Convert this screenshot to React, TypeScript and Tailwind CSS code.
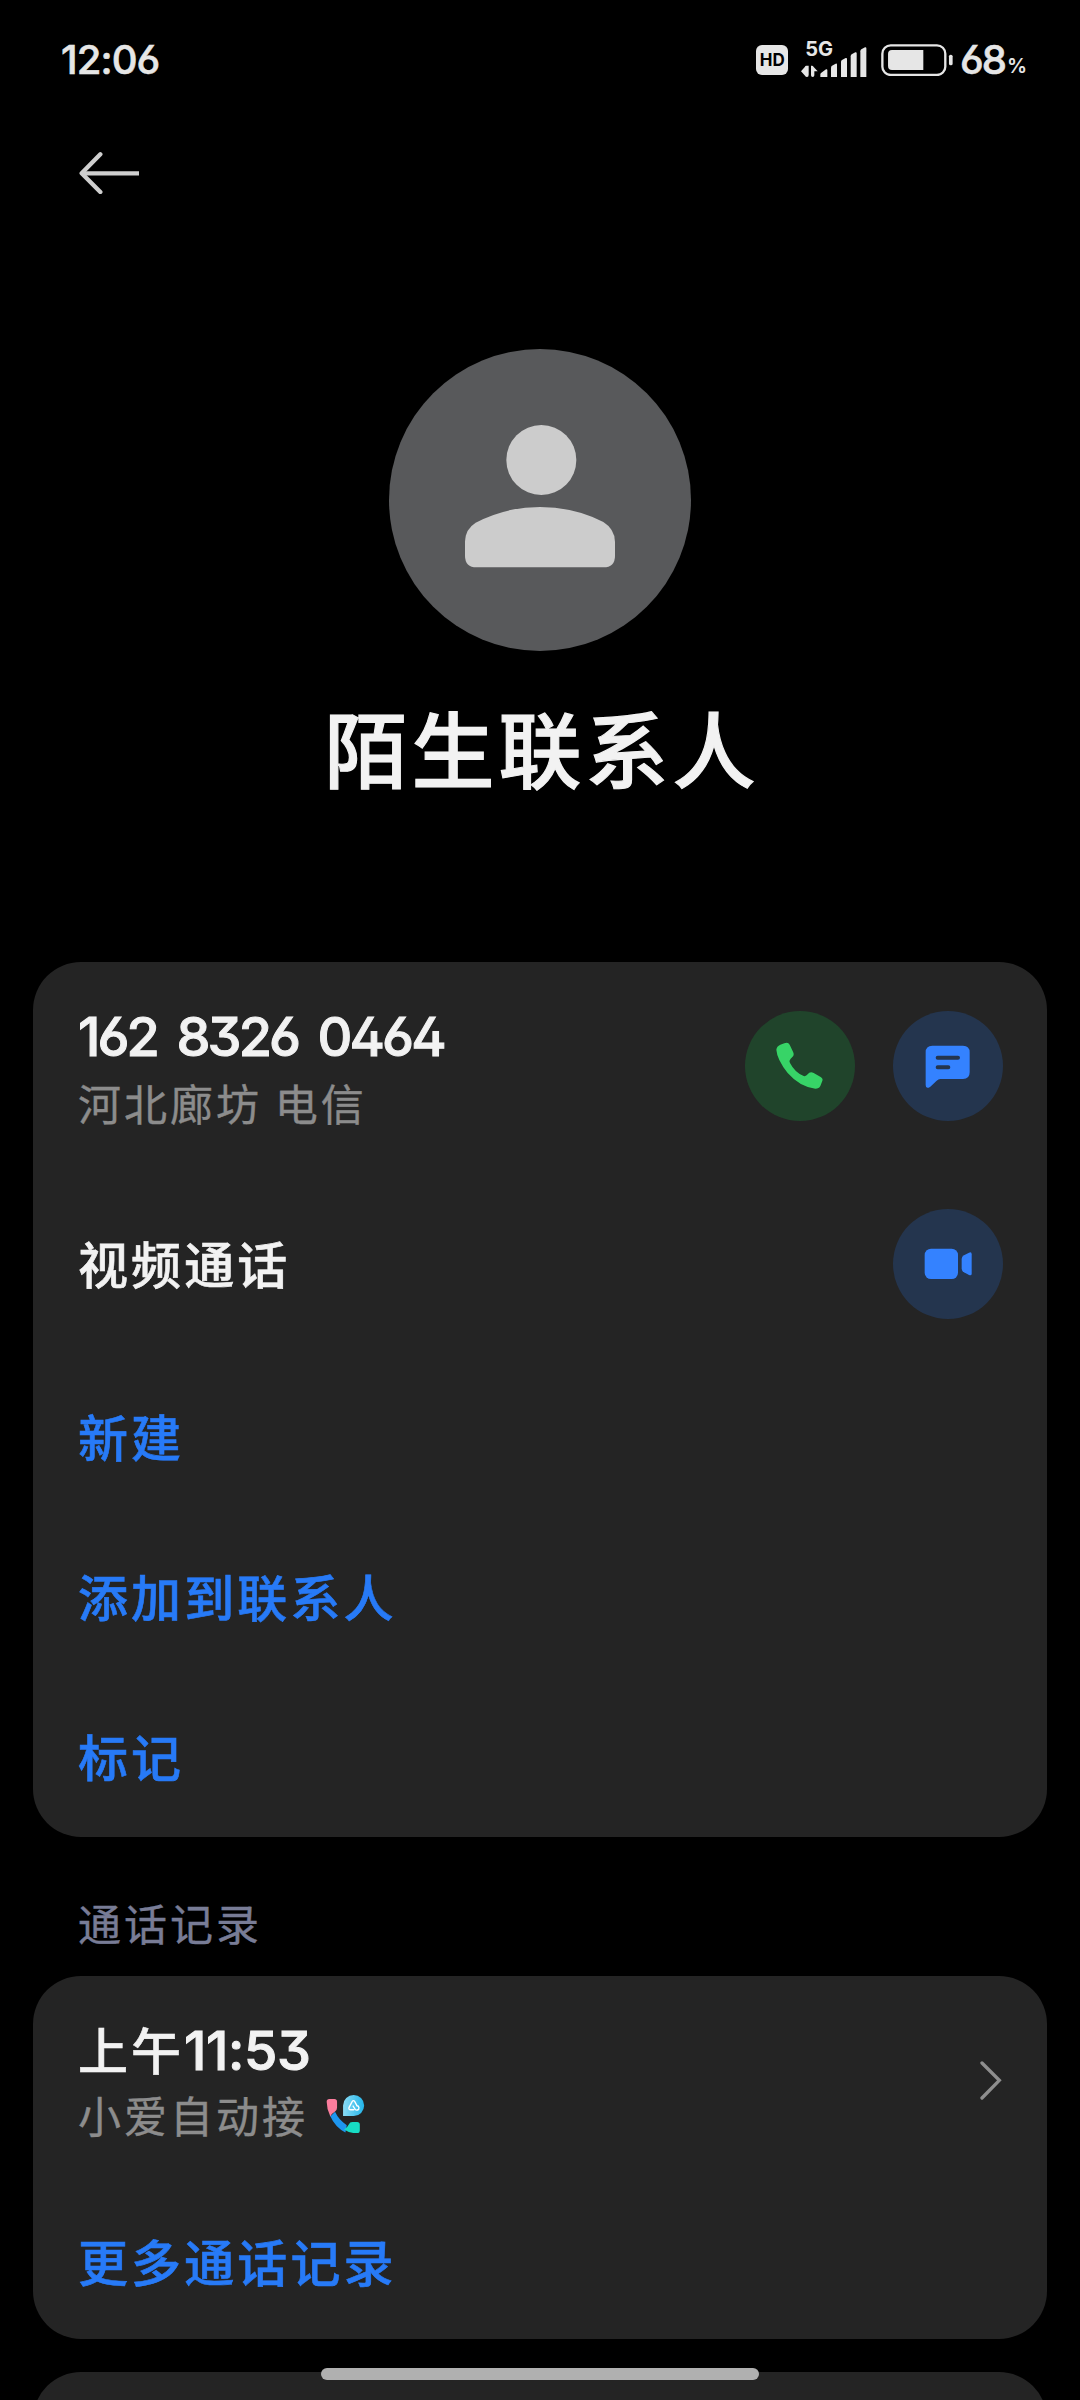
import type { ReactNode } from 'react';

const CJK = "font-['Noto_Sans_CJK_SC',sans-serif]";
const NUM = "font-['Inter','Noto_Sans_CJK_SC',sans-serif] [font-feature-settings:'ss01']";
const MEDIUM = 'font-medium [-webkit-text-stroke:0.6px_currentColor]';
const REGULAR = 'font-normal [-webkit-text-stroke:0.4px_currentColor]';

function StatusBar() {
  return (
    <header className="flex h-[118px] shrink-0 items-center pt-[2px] pr-[53px] pl-[61px] text-[#e6e6e6]">
      <span className={`text-[40px] leading-none font-medium tracking-[-0.9px] [-webkit-text-stroke:0.6px_currentColor] ${NUM}`}>12:06</span>
      <div className="ml-auto flex items-center">
        <span className="flex h-[30px] w-8 items-center justify-center rounded-[6px] bg-[#e6e6e6] font-['Inter',sans-serif] text-[17px] leading-none font-bold text-black">
          HD
        </span>
        <div className="ml-[13px] flex h-[34px] w-[66px] flex-col">
          <span className="h-[14px] pl-[4px] font-['Inter',sans-serif] text-[20px] leading-[12px] font-bold">5G</span>
        </div>
        <svg viewBox="214 60 200 108" className="-ml-[66px] h-[36px] w-[66.7px]" fill="currentColor">
          <path d="M214 148L226 134V148ZM214 148H226V134Q226 131 230 131H237V158Q237 165 232 165Q228 165 226 161Z" />
          <path d="M244 131H247Q250 131 252 135L264 148H254V160Q254 165 249 165Q244 165 244 160Z" />
          <path d="M272 165v-8q0-3 3-5l14-10q4-2 4 3v20z" />
          <path d="M304 165v-28q0-4 3-6l11-6q4-1 4 3v37z" />
          <path d="M334 165v-45q0-4 3-6l11-6q4-1 4 3v54z" />
          <path d="M363 165v-62q0-4 3-6l11-6q4-1 4 3v71z" />
          <path d="M392 165v-77q0-4 3-6l11-6q4-1 4 3v86z" />
        </svg>
        <svg viewBox="453 69 216 97" className="ml-[13px] h-[32.3px] w-[72px]">
          <rect x="457" y="73" width="189" height="89" rx="25" fill="none" stroke="currentColor" strokeWidth="7" />
          <path d="M486 87h94v60h-94q-12 0-12-12v-36q0-12 12-12z" fill="currentColor" />
          <rect x="657" y="101" width="11" height="32" rx="5" fill="currentColor" />
        </svg>
        <span className={`ml-[7px] text-[40px] leading-none font-medium tracking-[-2px] [-webkit-text-stroke:0.6px_currentColor] ${NUM}`}>68</span>
        <span className={`mt-[11px] ml-[2px] text-[20px] leading-none font-semibold ${NUM}`}>%</span>
      </div>
    </header>
  );
}

function Avatar() {
  return (
    <svg viewBox="0 0 906 906" className="size-[302px] shrink-0">
      <circle cx="453" cy="453" r="453" fill="#58595b" />
      <circle cx="457" cy="333" r="105" fill="#ccc" />
      <path
        d="M228 578Q229 540 260 521Q350 474 453 474Q556 474 643 519Q677 540 678 578V620Q678 655 643 655H263Q228 655 228 620Z"
        fill="#ccc"
      />
    </svg>
  );
}

function RoundButton({ label, className, children }: { label: string; className: string; children: ReactNode }) {
  return (
    <button aria-label={label} className={`size-[110px] rounded-full ${className}`}>
      <svg viewBox="0 0 330 330" className="size-full" fill="currentColor">
        {children}
      </svg>
    </button>
  );
}

function Card({ children, className = '' }: { children?: ReactNode; className?: string }) {
  return <section className={`mx-[33px] rounded-[48px] bg-[#242424] pr-[44px] pl-[45px] ${className}`}>{children}</section>;
}

function LinkRow({ children, className = 'h-[160px]' }: { children: ReactNode; className?: string }) {
  return (
    <div className={`flex items-center pb-[4px] text-[50px] leading-none tracking-[3.1px] text-[#277af7] ${MEDIUM} ${className}`}>
      {children}
    </div>
  );
}

function AutoAnswerIcon() {
  return (
    <svg viewBox="0 0 115 115" className="size-[38.5px]">
      <defs>
        <linearGradient id="bubble" x1="0" y1="0" x2="1" y2="0">
          <stop offset="0" stopColor="#8bdcf5" />
          <stop offset="1" stopColor="#22b5ea" />
        </linearGradient>
      </defs>
      <path d="M15 62L27 50Q38 74 62 90L58 112Q28 98 11 60Z" fill="#1e96ee" />
      <path d="M10 12H25Q33 12 33 20V38Q33 45 27 49Q17 55 13 64Q2 42 2 20Q2 12 10 12Z" fill="#fb7d9d" />
      <path d="M54 103Q64 97 68 88Q71 81 79 81H93Q101 81 101 89V106Q101 114 93 114H87Q68 113 54 103Z" fill="#17dcc4" />
      <path d="M51 63V31A31.5 31.5 0 1 1 83 63Z" fill="url(#bubble)" />
      <path
        d="M83 44H74Q66 44 69 37L78 20Q82 14 86 20L92 31M92 32a6.500 6.500 0 1 1-6 9l-5-8"
        fill="none"
        stroke="#fff"
        strokeWidth="4"
        strokeLinecap="round"
      />
    </svg>
  );
}

export default function App() {
  return (
    <div className={`relative flex h-[2400px] w-[1080px] flex-col overflow-hidden bg-black ${CJK}`}>
      <StatusBar />

      <nav className="flex h-[110px] shrink-0 items-center pl-[79px] text-[#cfcfcf]">
        <svg viewBox="0 0 183 126" className="h-[42px] w-[61px]" fill="none" stroke="currentColor" strokeWidth="13" strokeLinecap="round" strokeLinejoin="round">
          <path d="M64 7L8 64L64 120" />
          <path d="M10 64H180" strokeLinecap="butt" />
        </svg>
      </nav>

      <div className="flex h-[734px] shrink-0 flex-col items-center pt-[121px]">
        <Avatar />
        <h1 className="mt-[50px] pl-[4px] text-[83px] leading-[90px] font-medium tracking-[4px] text-[#f2f2f2] [-webkit-text-stroke:1.1px_currentColor]">
          陌生联系人
        </h1>
      </div>

      <Card className="h-[875px] shrink-0">
        <div className="flex h-[208px] items-center justify-between">
          <div className="flex flex-col pt-[7px]">
            <span className={`text-[54px] leading-[64px] font-medium tracking-[-2.9px] [word-spacing:8px] text-[#f2f2f2] [-webkit-text-stroke:1px_currentColor] ${NUM}`}>
              162 8326 0464
            </span>
            <span className={`text-[43px] leading-[66px] tracking-[3px] text-[#8c8c8c] ${REGULAR}`}>河北廊坊 电信</span>
          </div>
          <div className="flex gap-[38px]">
            <RoundButton label="拨打电话" className="bg-[#20442b] text-[#37d467]">
              <path d="M118 97Q129 92 134 101L144 122Q149 132 142 138L137 143Q131 149 135 156Q150 185 176 195Q183 197 188 190Q195 180 206 186L227 198Q236 203 231 212L226 225Q222 233 211 233Q165 228 128 186Q96 145 94 116Q95 106 106 101Z" />
            </RoundButton>
            <RoundButton label="发送短信" className="bg-[#24354e] text-[#3482ff]">
              <path d="M118 104H210Q230 104 230 124V184Q230 204 210 204H142Q136 204 131 209L112 227Q98 236 98 222V124Q98 104 118 104Z" />
              <path d="M134 140H195M134 169H166" stroke="#24354e" strokeWidth="12" strokeLinecap="round" />
            </RoundButton>
          </div>
        </div>
        <div className="flex h-[187px] items-center justify-between">
          <span className={`pb-[3px] text-[50px] leading-none tracking-[3.1px] text-[#f2f2f2] ${MEDIUM}`}>视频通话</span>
          <RoundButton label="视频通话" className="bg-[#24354e] text-[#3482ff]">
            <rect x="95" y="119" width="100" height="91" rx="19" />
            <path d="M206 150Q206 143 213 139L228 131Q236 127 236 136V194Q236 201 228 198L213 190Q206 186 206 179Z" />
          </RoundButton>
        </div>
        <LinkRow>新建</LinkRow>
        <LinkRow>添加到联系人</LinkRow>
        <LinkRow>标记</LinkRow>
      </Card>

      <h2 className={`flex h-[139px] shrink-0 items-center pt-[32px] pl-[78px] text-[43px] leading-none tracking-[3px] text-[#787c96] ${REGULAR}`}>
        通话记录
      </h2>

      <Card className="h-[363px] shrink-0">
        <div className="flex h-[208px] items-center justify-between">
          <div className="flex flex-col pt-[2px]">
            <span className={`text-[50px] leading-[66px] tracking-[3px] text-[#f2f2f2] ${MEDIUM}`}>
              上午
              <span className={`text-[54px] leading-none font-medium tracking-[-0.4px] [-webkit-text-stroke:1px_currentColor] ${NUM}`}>11:53</span>
            </span>
            <span className={`flex items-center gap-[18px] text-[43px] leading-[66px] tracking-[3px] text-[#8c8c8c] ${REGULAR}`}>
              小爱自动接
              <AutoAnswerIcon />
            </span>
          </div>
          <svg viewBox="0 0 66 117" className="mr-[1px] h-[39px] w-[22px]" fill="none" stroke="#8e8e8e" strokeWidth="10" strokeLinecap="round">
            <path d="M6 6L58 58L6 111" />
          </svg>
        </div>
        <LinkRow className="h-[155px]">更多通话记录</LinkRow>
      </Card>

      <Card className="mt-[33px] h-[200px] shrink-0" />

      <div className="absolute top-[2368px] left-[321px] h-[12px] w-[438px] rounded-full bg-[#b0b0b0]" />
    </div>
  );
}
